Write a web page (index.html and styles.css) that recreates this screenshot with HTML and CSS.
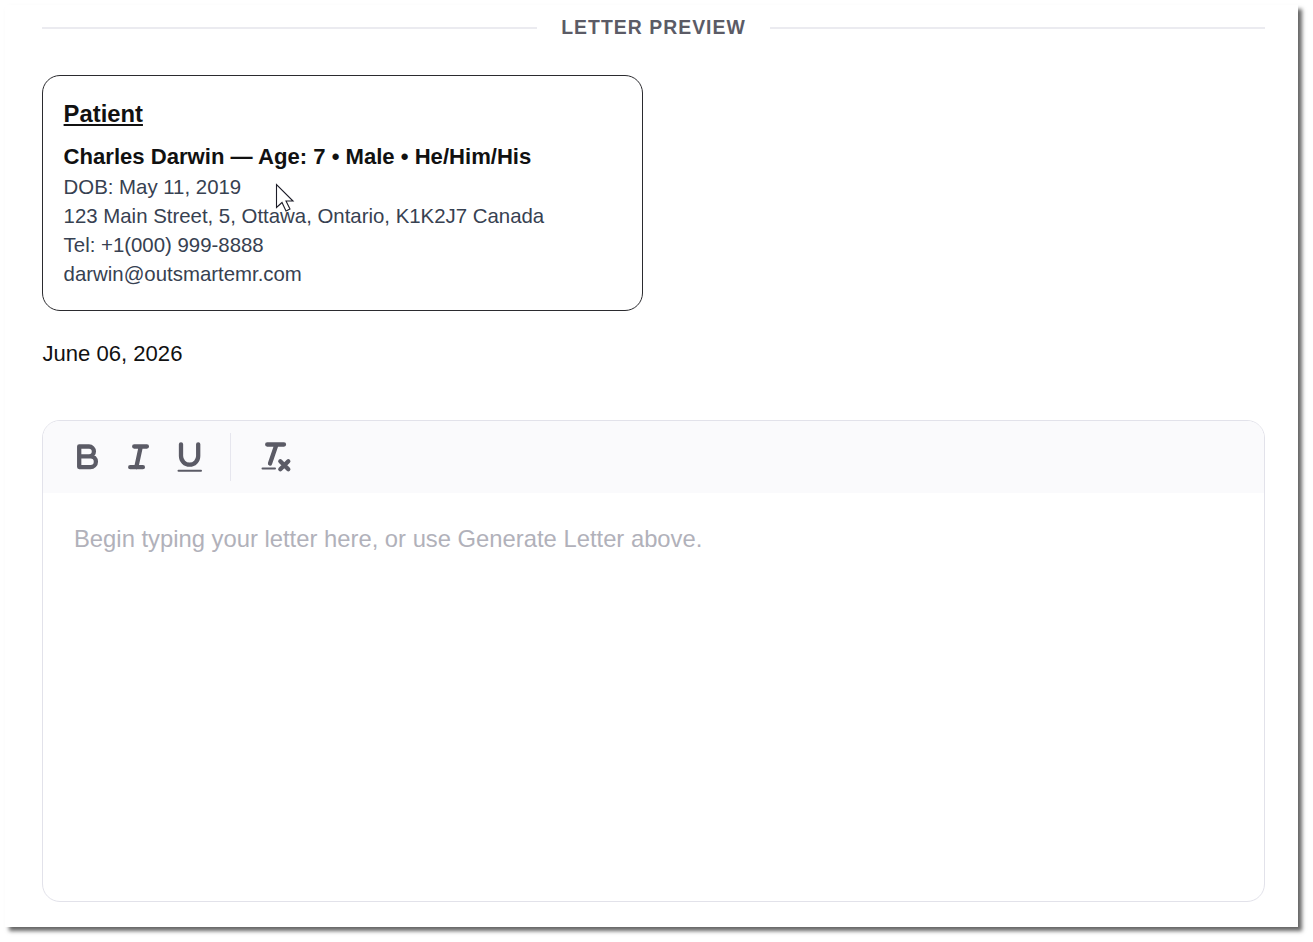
FILE: index.html
```html
<!DOCTYPE html>
<html lang="en">
<head>
  <meta charset="UTF-8">
  <meta name="viewport" content="width=device-width, initial-scale=1">
  <title>Letter Preview</title>
  <link rel="stylesheet" href="styles.css">
</head>
<body>
  <main class="sheet">
    <h1 class="divider">Letter Preview</h1>

    <section class="patient">
      <h2>Patient</h2>
      <h3>Charles Darwin — Age: 7 • Male • He/Him/His</h3>
      <p>DOB: May 11, 2019</p>
      <p>123 Main Street, 5, Ottawa, Ontario, K1K2J7 Canada</p>
      <p>Tel: +1(000) 999-8888</p>
      <p>darwin@outsmartemr.com</p>
      <svg class="cursor" width="20" height="30" viewBox="0 0 20 30">
        <path d="M1.500 1.500v23l5.500-5 4 8.500 4-2-4-8h7z" fill="#fff" stroke="#1c1c28" stroke-width="1.1"/>
      </svg>
    </section>

    <p class="date">June 06, 2026</p>

    <section class="editor">
      <div class="toolbar">
        <button type="button" aria-label="Bold">
          <svg viewBox="0 0 36 36"><path d="M10.200 7.500h9.800a4.900 4.900 0 0 1 0 9.800h-9.800zM10.200 17.300h11.300a5.400 5.400 0 0 1 0 10.800h-11.300z"/></svg>
        </button>
        <button type="button" aria-label="Italic">
          <svg viewBox="0 0 36 36"><path d="M14.200 7.500h12.700M10.200 28.200h12.700M20.800 7.500l-4.500 20.700"/></svg>
        </button>
        <button type="button" aria-label="Underline">
          <svg viewBox="0 0 36 36"><path d="M10 5.300v11.800a8.600 8.600 0 0 0 17.200 0V5.300"/><path class="thin" d="M7.500 31.700h22.500"/></svg>
        </button>
        <span class="separator"></span>
        <button type="button" aria-label="Clear formatting">
          <svg viewBox="0 0 36 36"><path d="M11.200 5.500h16.800M20.500 5.500l-6.500 19M24.300 22.200l8 8M32.300 22.200l-8 8"/><path class="thin" d="M6.500 29.500h12.500"/></svg>
        </button>
      </div>
      <div class="content">Begin typing your letter here, or use Generate Letter above.</div>
    </section>
  </main>
</body>
</html>
```

FILE: styles.css
```css
* {
  box-sizing: border-box;
}

body {
  margin: 0;
  padding: 5px 15px 15px 5px;
  height: 942px;
  background: #fff;
  font-family: "Liberation Sans", Arial, sans-serif;
  color: #111;
}

h1, h2, h3, p {
  margin: 0;
}

.sheet {
  height: 922px;
  padding: 11px 33px 25px 37px;
  background: #fff;
  box-shadow: 4px 4px 4px rgba(0, 0, 0, 0.6);
}

.divider {
  display: flex;
  align-items: center;
  gap: 24px;
  height: 23px;
  padding-bottom: 2px;
  font-size: 19.4px;
  line-height: 24px;
  letter-spacing: 1.03px;
  text-transform: uppercase;
  color: #5b5b66;
}

.divider::before,
.divider::after {
  content: "";
  flex: 1;
  height: 2px;
  margin-top: 2px;
  background: #ebebf0;
}

.patient {
  position: relative;
  width: 601px;
  height: 236px;
  margin-top: 36px;
  padding: 21px 20.6px;
  border: 1px solid #2b2b2f;
  border-radius: 18px;
}

.patient h2 {
  font-size: 23.8px;
  line-height: 34px;
  text-decoration: underline;
}

.patient h3 {
  margin-top: 10px;
  margin-bottom: 1px;
  font-size: 22.1px;
  line-height: 31px;
}

.patient p {
  font-size: 20.4px;
  line-height: 29px;
  color: #374151;
}

.cursor {
  position: absolute;
  left: 232px;
  top: 107px;
}

.date {
  margin-top: 28px;
  padding-left: 0.4px;
  font-size: 22.1px;
  line-height: 30px;
}

.editor {
  height: 482px;
  margin-top: 51px;
  border: 1px solid #e2e2ea;
  border-radius: 18px;
  overflow: hidden;
}

.toolbar {
  display: flex;
  align-items: center;
  height: 72px;
  padding-left: 26px;
  gap: 15px;
  background: #fafafc;
}

.toolbar button {
  width: 36px;
  height: 36px;
  padding: 0;
  border: 0;
  background: none;
}

.toolbar svg {
  display: block;
  width: 36px;
  height: 36px;
  fill: none;
  stroke: #5b5b66;
  stroke-width: 4.3;
  stroke-linecap: round;
  stroke-linejoin: round;
}

.toolbar .thin {
  stroke-width: 2;
}

.separator {
  width: 1px;
  height: 48px;
  margin: 0 10px 0 8px;
  background: #e6e6ee;
}

.content {
  padding: 29px 31px;
  font-size: 23.8px;
  line-height: 34px;
  color: #b1b1ba;
}
```
